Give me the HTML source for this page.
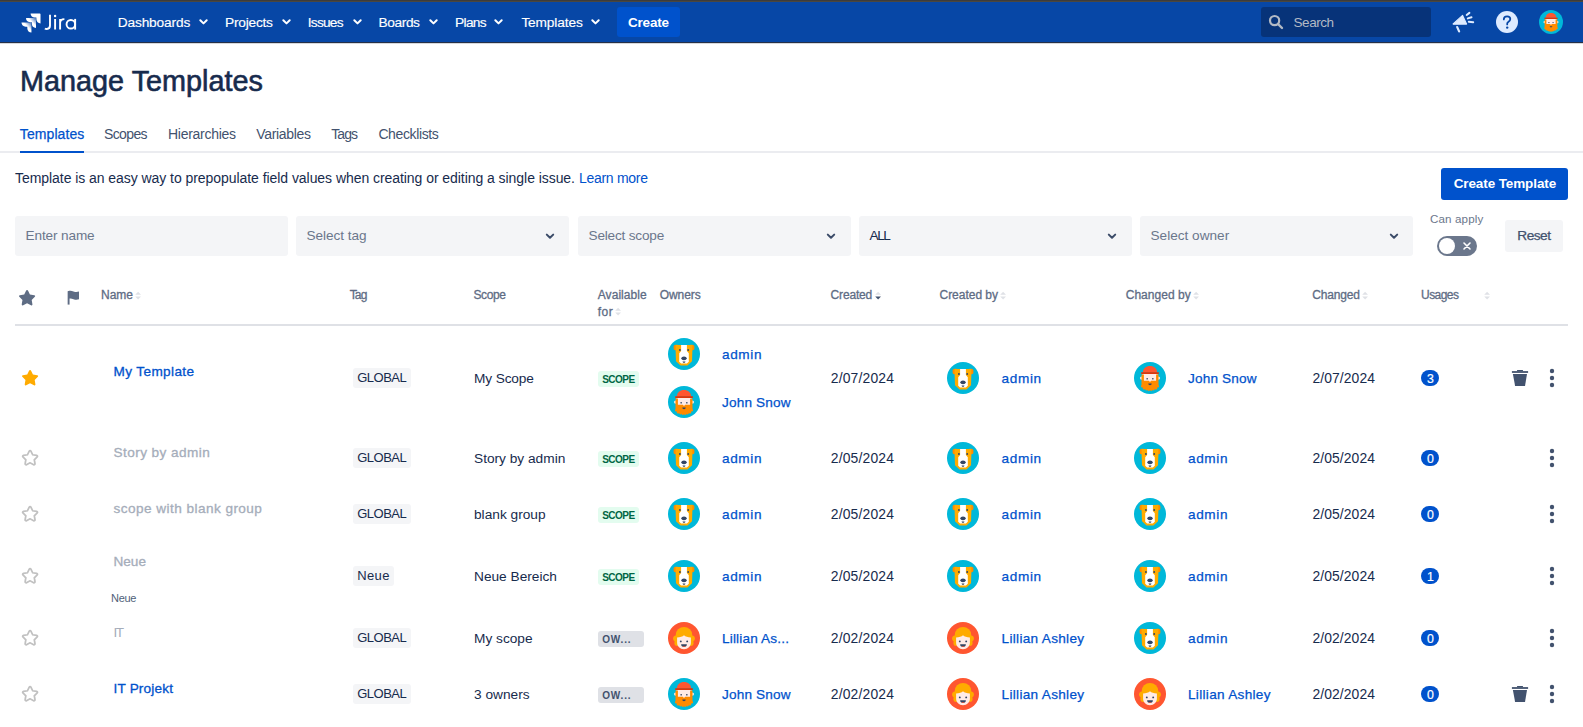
<!DOCTYPE html>
<html><head><meta charset="utf-8"><title>Manage Templates</title>
<style>
html,body{margin:0;padding:0;}
body{width:1583px;height:727px;overflow:hidden;position:relative;background:#fff;font-family:"Liberation Sans",sans-serif;}
.t{position:absolute;white-space:nowrap;line-height:1;}
.r{position:absolute;}
.a{position:absolute;overflow:visible;}
</style></head><body>
<div class="r" style="left:0px;top:0px;width:1583px;height:1px;background:#3c3c3c;"></div>
<div class="r" style="left:0px;top:1px;width:1583px;height:1px;background:#4a4740;"></div>
<div class="r" style="left:0px;top:2px;width:1583px;height:40px;background:#0747A6;"></div>
<div class="r" style="left:0px;top:42px;width:1583px;height:1px;background:#263046;"></div>
<div class="r" style="left:0px;top:43px;width:1583px;height:1px;background:#d6d8dc;"></div>
<svg class="a" style="left:20.7px;top:12.8px" width="20" height="20" viewBox="1.5 1.5 21 21">
<defs><linearGradient id="lg1" x1="0.98" y1="0.03" x2="0.6" y2="0.4"><stop offset="0.2" stop-color="#fff" stop-opacity="0.4"/><stop offset="1" stop-color="#fff"/></linearGradient></defs>
<path fill="#fff" d="M11.53 2c0 2.4 1.97 4.35 4.35 4.35h1.78v1.7c0 2.4 1.94 4.34 4.34 4.35V2.84a.84.84 0 0 0-.84-.84H11.53z"/>
<path fill="url(#lg1)" d="M6.77 6.8a4.362 4.362 0 0 0 4.34 4.34h1.8v1.72a4.362 4.362 0 0 0 4.34 4.34V7.63a.841.841 0 0 0-.83-.83H6.77z"/>
<path fill="url(#lg1)" d="M2 11.6c0 2.4 1.95 4.34 4.35 4.35h1.78v1.72c.01 2.39 1.95 4.33 4.34 4.34v-9.57a.84.84 0 0 0-.84-.84H2z"/>
</svg>
<svg class="a" style="left:0;top:0" width="90" height="40" viewBox="0 0 90 40"><g fill="none" stroke="#fff" stroke-width="1.9">
<path d="M50 14.8V25.6C50 28 48.8 29 46.9 29C46.1 29 45.4 28.8 44.9 28.4"/>
<path d="M55.1 18.9V29.6M60.1 18.9V29.6M60.1 23C60.1 20.4 61.600 19.1 64.400 19.1"/>
<circle cx="70.85" cy="24.25" r="4.3"/><path d="M75.15 18.9V29.6"/></g>
<circle cx="55.1" cy="16" r="1.2" fill="#fff"/></svg>
<div class="t" style="left:117.70px;top:15.50px;font-size:13.7px;color:#fff;font-weight:400;letter-spacing:-0.130px;-webkit-text-stroke:0.15px currentColor;">Dashboards</div>
<svg class="a" style="left:199px;top:18px" width="9" height="8" viewBox="0 0 9 8"><path d="M1.3 2.2 4.5 5.4 7.7 2.2" fill="none" stroke="#fff" stroke-width="2" stroke-linecap="round" stroke-linejoin="round"/></svg>
<div class="t" style="left:225.00px;top:15.50px;font-size:13.7px;color:#fff;font-weight:400;letter-spacing:-0.212px;-webkit-text-stroke:0.15px currentColor;">Projects</div>
<svg class="a" style="left:282px;top:18px" width="9" height="8" viewBox="0 0 9 8"><path d="M1.3 2.2 4.5 5.4 7.7 2.2" fill="none" stroke="#fff" stroke-width="2" stroke-linecap="round" stroke-linejoin="round"/></svg>
<div class="t" style="left:307.80px;top:15.50px;font-size:13.7px;color:#fff;font-weight:400;letter-spacing:-0.759px;-webkit-text-stroke:0.15px currentColor;">Issues</div>
<svg class="a" style="left:352.5px;top:18px" width="9" height="8" viewBox="0 0 9 8"><path d="M1.3 2.2 4.5 5.4 7.7 2.2" fill="none" stroke="#fff" stroke-width="2" stroke-linecap="round" stroke-linejoin="round"/></svg>
<div class="t" style="left:378.60px;top:15.50px;font-size:13.7px;color:#fff;font-weight:400;letter-spacing:-0.400px;-webkit-text-stroke:0.15px currentColor;">Boards</div>
<svg class="a" style="left:428.8px;top:18px" width="9" height="8" viewBox="0 0 9 8"><path d="M1.3 2.2 4.5 5.4 7.7 2.2" fill="none" stroke="#fff" stroke-width="2" stroke-linecap="round" stroke-linejoin="round"/></svg>
<div class="t" style="left:455.00px;top:15.50px;font-size:13.7px;color:#fff;font-weight:400;letter-spacing:-0.641px;-webkit-text-stroke:0.15px currentColor;">Plans</div>
<svg class="a" style="left:494px;top:18px" width="9" height="8" viewBox="0 0 9 8"><path d="M1.3 2.2 4.5 5.4 7.7 2.2" fill="none" stroke="#fff" stroke-width="2" stroke-linecap="round" stroke-linejoin="round"/></svg>
<div class="t" style="left:521.40px;top:15.50px;font-size:13.7px;color:#fff;font-weight:400;letter-spacing:-0.131px;-webkit-text-stroke:0.15px currentColor;">Templates</div>
<svg class="a" style="left:591px;top:18px" width="9" height="8" viewBox="0 0 9 8"><path d="M1.3 2.2 4.5 5.4 7.7 2.2" fill="none" stroke="#fff" stroke-width="2" stroke-linecap="round" stroke-linejoin="round"/></svg>
<div class="r" style="left:617px;top:7px;width:63px;height:30px;background:#0052CC;border-radius:3px;"></div>
<div class="t" style="left:628.00px;top:15.67px;font-size:13.5px;color:#fff;font-weight:700;letter-spacing:-0.205px;">Create</div>
<div class="r" style="left:1261px;top:7px;width:170px;height:30px;background:#073379;border-radius:3px;"></div>
<svg class="a" style="left:1268px;top:14px" width="16" height="16" viewBox="0 0 16 16"><circle cx="6.6" cy="6.6" r="4.6" fill="none" stroke="#B3BAC5" stroke-width="2.2"/><path d="M10 10 14 14" stroke="#B3BAC5" stroke-width="2.4" stroke-linecap="round"/></svg>
<div class="t" style="left:1293.60px;top:15.87px;font-size:13.5px;color:#B3BAC5;font-weight:400;letter-spacing:-0.474px;">Search</div>
<svg class="a" style="left:1451px;top:11px" width="24" height="22" viewBox="0 0 24 22">
<path d="M2.1 12.9 11.6 4.4 15.6 13.1 2.3 13.2Z" fill="#DEEBFF" stroke="#DEEBFF" stroke-width="1.1" stroke-linejoin="round"/>
<path d="M6.2 16.1 8.1 20.4" stroke="#DEEBFF" stroke-width="2.2" stroke-linecap="round"/>
<path d="M15.7 4 18.4 1.9M16.8 7.4 20.5 6.3M17.8 10.8 22.2 11.2" stroke="#DEEBFF" stroke-width="2" stroke-linecap="round"/>
</svg>
<svg class="a" style="left:1496px;top:11px" width="22" height="22" viewBox="0 0 22 22">
<circle cx="11" cy="11" r="11" fill="#DEEBFF"/>
<path d="M7.8 8.4c0-2 1.5-3.1 3.3-3.1 1.9 0 3.2 1.2 3.2 2.8 0 1.6-1 2.2-2 2.8-.8.5-1.1.9-1.1 1.8v.7" fill="none" stroke="#0747A6" stroke-width="1.75" stroke-linecap="round"/>
<circle cx="11.2" cy="16.6" r="1.2" fill="#0747A6"/>
</svg>
<svg class="a" style="left:1539px;top:10px" width="24" height="24" viewBox="0 0 32 32">
<circle cx="16" cy="16" r="16" fill="#00B8D9"/>
<circle cx="7.6" cy="16.1" r="1.6" fill="#FFEBE6"/><circle cx="24.4" cy="16.1" r="1.6" fill="#FFEBE6"/>
<path d="M8.4 11.5h15.2v8.5H8.4Z" fill="#FFEBE6"/>
<path d="M7.5 12.6H9.9V18.8H14.8L16 19.9 17.2 18.8H22.1V12.6H24.5V23C24.5 25.5 21 27.6 16 27.6S7.5 25.5 7.5 23Z" fill="#FF8B00"/><g fill="#FF8B00"><circle cx="8.3" cy="24.2" r="1.3"/><circle cx="10.2" cy="25.9" r="1.5"/><circle cx="12.6" cy="27" r="1.4"/><circle cx="14.8" cy="27.6" r="1.3"/><circle cx="17.2" cy="27.6" r="1.3"/><circle cx="19.4" cy="27" r="1.4"/><circle cx="21.8" cy="25.9" r="1.5"/><circle cx="23.7" cy="24.2" r="1.3"/></g>
<path d="M14.3 21.6h3.4c0 .9-.7 1.6-1.7 1.6s-1.7-.7-1.7-1.6Z" fill="#344563"/>
<path d="M8.9 10.4C8.9 6.6 12 4 16 4s7.1 2.6 7.1 6.4Z" fill="#FF5630"/>
<path d="M7.2 10.2h17.6v1.8H7.2Z" fill="#DE350B"/>
<rect x="12.4" y="16.2" width="1.6" height="1.2" fill="#344563"/><rect x="18" y="16.2" width="1.6" height="1.2" fill="#344563"/>
</svg>
<div class="t" style="left:20.00px;top:66.82px;font-size:28.8px;color:#172B4D;font-weight:400;letter-spacing:0.012px;-webkit-text-stroke:0.6px currentColor;">Manage Templates</div>
<div class="t" style="left:19.80px;top:127.15px;font-size:14px;color:#0052CC;font-weight:400;letter-spacing:0.086px;-webkit-text-stroke:0.25px currentColor;">Templates</div>
<div class="t" style="left:104.00px;top:127.15px;font-size:14px;color:#42526E;font-weight:400;letter-spacing:-0.618px;">Scopes</div>
<div class="t" style="left:168.00px;top:127.15px;font-size:14px;color:#42526E;font-weight:400;letter-spacing:-0.280px;">Hierarchies</div>
<div class="t" style="left:256.30px;top:127.15px;font-size:14px;color:#42526E;font-weight:400;letter-spacing:-0.329px;">Variables</div>
<div class="t" style="left:331.30px;top:127.15px;font-size:14px;color:#42526E;font-weight:400;letter-spacing:-0.956px;">Tags</div>
<div class="t" style="left:378.40px;top:127.15px;font-size:14px;color:#42526E;font-weight:400;letter-spacing:-0.378px;">Checklists</div>
<div class="r" style="left:0px;top:151px;width:1583px;height:2px;background:#EBECF0;"></div>
<div class="r" style="left:20px;top:151px;width:64px;height:2px;background:#0052CC;"></div>
<div class="t" style="left:15.00px;top:170.75px;font-size:14px;color:#172B4D;font-weight:400;letter-spacing:-0.055px;">Template is an easy way to prepopulate field values when creating or editing a single issue.</div>
<div class="t" style="left:579.00px;top:170.75px;font-size:14px;color:#0052CC;font-weight:400;letter-spacing:-0.288px;">Learn more</div>
<div class="r" style="left:1441px;top:168px;width:127px;height:32px;background:#0052CC;border-radius:3px;"></div>
<div class="t" style="left:1453.70px;top:177.27px;font-size:13.5px;color:#fff;font-weight:700;letter-spacing:-0.110px;">Create Template</div>
<div class="r" style="left:15px;top:216px;width:273px;height:40px;background:#F4F5F7;border-radius:3px;"></div>
<div class="t" style="left:25.50px;top:229.18px;font-size:13.6px;color:#6B778C;font-weight:400;letter-spacing:-0.122px;">Enter name</div>
<div class="r" style="left:296px;top:216px;width:273px;height:40px;background:#F4F5F7;border-radius:3px;"></div>
<div class="t" style="left:306.50px;top:229.18px;font-size:13.6px;color:#6B778C;font-weight:400;letter-spacing:-0.031px;">Select tag</div>
<svg class="a" style="left:545.0px;top:232.3px" width="10" height="9" viewBox="0 0 10 9"><path d="M1.8 2.6 5 5.8 8.2 2.6" fill="none" stroke="#3B4B68" stroke-width="2" stroke-linecap="round" stroke-linejoin="round"/></svg>
<div class="r" style="left:578px;top:216px;width:273px;height:40px;background:#F4F5F7;border-radius:3px;"></div>
<div class="t" style="left:588.50px;top:229.18px;font-size:13.6px;color:#6B778C;font-weight:400;letter-spacing:-0.189px;">Select scope</div>
<svg class="a" style="left:826.2px;top:232.3px" width="10" height="9" viewBox="0 0 10 9"><path d="M1.8 2.6 5 5.8 8.2 2.6" fill="none" stroke="#3B4B68" stroke-width="2" stroke-linecap="round" stroke-linejoin="round"/></svg>
<div class="r" style="left:859px;top:216px;width:273px;height:40px;background:#F4F5F7;border-radius:3px;"></div>
<div class="t" style="left:869.50px;top:229.18px;font-size:13.6px;color:#172B4D;font-weight:400;letter-spacing:-1.397px;">ALL</div>
<svg class="a" style="left:1106.5px;top:232.3px" width="10" height="9" viewBox="0 0 10 9"><path d="M1.8 2.6 5 5.8 8.2 2.6" fill="none" stroke="#3B4B68" stroke-width="2" stroke-linecap="round" stroke-linejoin="round"/></svg>
<div class="r" style="left:1140px;top:216px;width:273px;height:40px;background:#F4F5F7;border-radius:3px;"></div>
<div class="t" style="left:1150.50px;top:229.18px;font-size:13.6px;color:#6B778C;font-weight:400;letter-spacing:0.007px;">Select owner</div>
<svg class="a" style="left:1389.0px;top:232.3px" width="10" height="9" viewBox="0 0 10 9"><path d="M1.8 2.6 5 5.8 8.2 2.6" fill="none" stroke="#3B4B68" stroke-width="2" stroke-linecap="round" stroke-linejoin="round"/></svg>
<div class="t" style="left:1430.00px;top:212.98px;font-size:11.6px;color:#6B778C;font-weight:400;letter-spacing:0.133px;">Can apply</div>
<div class="r" style="left:1437px;top:236px;width:40px;height:20px;background:#6B778C;border-radius:10px;"></div>
<div class="r" style="left:1439px;top:238px;width:16px;height:16px;background:#fff;border-radius:8px;"></div>
<svg class="a" style="left:1461px;top:240px" width="12" height="12" viewBox="0 0 12 12"><path d="M3 3 9 9M9 3 3 9" stroke="#fff" stroke-width="1.6" stroke-linecap="round"/></svg>
<div class="r" style="left:1505px;top:220px;width:58px;height:32px;background:#F4F5F7;border-radius:3px;"></div>
<div class="t" style="left:1517.30px;top:229.40px;font-size:13.7px;color:#42526E;font-weight:400;letter-spacing:-0.521px;-webkit-text-stroke:0.25px currentColor;">Reset</div>
<svg class="a" style="left:14.93px;top:286.27px" width="24" height="24" viewBox="0 0 24 24"><path fill="#5E6C84" d="M12.072 17.284l-3.905 2.053a1 1 0 0 1-1.451-1.054l.745-4.349-3.159-3.08a1 1 0 0 1 .554-1.705l4.366-.635 1.953-3.956a1 1 0 0 1 1.794 0l1.952 3.956 4.366.635a1 1 0 0 1 .555 1.705l-3.16 3.08.746 4.349a1 1 0 0 1-1.45 1.054l-3.905-2.053z"/></svg>
<svg class="a" style="left:67px;top:290px" width="13" height="16" viewBox="0 0 13 16"><path d="M1.6 1.2v13.4" stroke="#5E6C84" stroke-width="1.9" stroke-linecap="butt"/><path d="M1 1.2c2-.8 3.5-.6 5.5.2 2 .7 3.500.8 5.500.1v7.800c-2 .700-3.500.600-5.500-.100-2-.800-3.500-1-5.500-.200Z" fill="#5E6C84"/></svg>
<div class="t" style="left:101.00px;top:289.34px;font-size:12px;color:#5E6C84;font-weight:400;letter-spacing:-0.005px;-webkit-text-stroke:0.3px currentColor;">Name</div>
<svg class="a" style="left:135px;top:291px" width="8" height="10" viewBox="0 0 8 10"><path d="M0.2 3.8 3.1 0.8 6 3.8Z" fill="#DFE1E6"/><path d="M0.2 5.6 3.1 8.6 6 5.6Z" fill="#DFE1E6"/></svg>
<div class="t" style="left:349.70px;top:289.34px;font-size:12px;color:#5E6C84;font-weight:400;letter-spacing:-0.822px;-webkit-text-stroke:0.3px currentColor;">Tag</div>
<div class="t" style="left:473.50px;top:289.34px;font-size:12px;color:#5E6C84;font-weight:400;letter-spacing:-0.380px;-webkit-text-stroke:0.3px currentColor;">Scope</div>
<div class="t" style="left:597.80px;top:289.34px;font-size:12px;color:#5E6C84;font-weight:400;letter-spacing:0.040px;-webkit-text-stroke:0.3px currentColor;">Available</div>
<div class="t" style="left:659.80px;top:289.34px;font-size:12px;color:#5E6C84;font-weight:400;letter-spacing:-0.088px;-webkit-text-stroke:0.3px currentColor;">Owners</div>
<div class="t" style="left:830.60px;top:289.34px;font-size:12px;color:#5E6C84;font-weight:400;letter-spacing:-0.166px;-webkit-text-stroke:0.3px currentColor;">Created</div>
<svg class="a" style="left:875px;top:291px" width="8" height="10" viewBox="0 0 8 10"><path d="M0.2 3.8 3.1 0.8 6 3.8Z" fill="#DFE1E6"/><path d="M0.2 5.6 3.1 8.6 6 5.6Z" fill="#42526E"/></svg>
<div class="t" style="left:939.50px;top:289.34px;font-size:12px;color:#5E6C84;font-weight:400;letter-spacing:-0.023px;-webkit-text-stroke:0.3px currentColor;">Created by</div>
<svg class="a" style="left:1000px;top:291px" width="8" height="10" viewBox="0 0 8 10"><path d="M0.2 3.8 3.1 0.8 6 3.8Z" fill="#DFE1E6"/><path d="M0.2 5.6 3.1 8.6 6 5.6Z" fill="#DFE1E6"/></svg>
<div class="t" style="left:1125.70px;top:289.34px;font-size:12px;color:#5E6C84;font-weight:400;letter-spacing:0.032px;-webkit-text-stroke:0.3px currentColor;">Changed by</div>
<svg class="a" style="left:1192.8px;top:291px" width="8" height="10" viewBox="0 0 8 10"><path d="M0.2 3.8 3.1 0.8 6 3.8Z" fill="#DFE1E6"/><path d="M0.2 5.6 3.1 8.6 6 5.6Z" fill="#DFE1E6"/></svg>
<div class="t" style="left:1312.20px;top:289.34px;font-size:12px;color:#5E6C84;font-weight:400;letter-spacing:-0.151px;-webkit-text-stroke:0.3px currentColor;">Changed</div>
<svg class="a" style="left:1362px;top:291px" width="8" height="10" viewBox="0 0 8 10"><path d="M0.2 3.8 3.1 0.8 6 3.8Z" fill="#DFE1E6"/><path d="M0.2 5.6 3.1 8.6 6 5.6Z" fill="#DFE1E6"/></svg>
<div class="t" style="left:1421.00px;top:289.34px;font-size:12px;color:#5E6C84;font-weight:400;letter-spacing:-0.538px;-webkit-text-stroke:0.3px currentColor;">Usages</div>
<svg class="a" style="left:1484px;top:291px" width="8" height="10" viewBox="0 0 8 10"><path d="M0.2 3.8 3.1 0.8 6 3.8Z" fill="#DFE1E6"/><path d="M0.2 5.6 3.1 8.6 6 5.6Z" fill="#DFE1E6"/></svg>
<div class="t" style="left:597.80px;top:305.94px;font-size:12px;color:#5E6C84;font-weight:400;letter-spacing:0.448px;-webkit-text-stroke:0.3px currentColor;">for</div>
<svg class="a" style="left:615.2px;top:306.8px" width="8" height="10" viewBox="0 0 8 10"><path d="M0.2 3.8 3.1 0.8 6 3.8Z" fill="#DFE1E6"/><path d="M0.2 5.6 3.1 8.6 6 5.6Z" fill="#DFE1E6"/></svg>
<div class="r" style="left:15px;top:324px;width:1553px;height:2px;background:#DFE1E6;"></div>
<svg class="a" style="left:17.93px;top:366.27px" width="24" height="24" viewBox="0 0 24 24"><path d="M12.072 17.284l-3.905 2.053a1 1 0 0 1-1.451-1.054l.745-4.349-3.159-3.08a1 1 0 0 1 .554-1.705l4.366-.635 1.953-3.956a1 1 0 0 1 1.794 0l1.952 3.956 4.366.635a1 1 0 0 1 .555 1.705l-3.16 3.08.746 4.349a1 1 0 0 1-1.45 1.054l-3.905-2.053z" fill="#FFAB00"/></svg>
<div class="t" style="left:113.50px;top:365.18px;font-size:13.6px;color:#0052CC;font-weight:400;letter-spacing:0.376px;-webkit-text-stroke:0.3px currentColor;">My Template</div>
<div class="r" style="left:353px;top:368.0px;width:57.7px;height:19.5px;background:#F4F5F7;border-radius:3px;"></div>
<div class="t" style="left:357.20px;top:370.79px;font-size:13px;color:#172B4D;font-weight:400;letter-spacing:-0.505px;">GLOBAL</div>
<div class="t" style="left:474.00px;top:371.60px;font-size:13.7px;color:#172B4D;font-weight:400;letter-spacing:-0.130px;">My Scope</div>
<div class="r" style="left:598px;top:371px;width:41px;height:16px;background:#E3FCEF;border-radius:3px;"></div>
<div class="t" style="left:602.20px;top:374.83px;font-size:10px;color:#006644;font-weight:700;letter-spacing:-0.527px;">SCOPE</div>
<svg class="a" style="left:668px;top:338px" width="32" height="32" viewBox="0 0 32 32">
<circle cx="16" cy="16" r="16" fill="#00B8D9"/>
<path d="M5.6 8.8c0-1.3.9-2.1 2.1-2.1h2v5.1c-.3.3-.8.4-1.300.4H7.2c-.9 0-1.6-.7-1.6-1.6Z" fill="#FF8B00"/>
<path d="M26.4 8.8c0-1.3-.9-2.1-2.1-2.1h-2v5.1c.3.3.8.4 1.300.4h1.200c.9 0 1.6-.7 1.6-1.6Z" fill="#FF8B00"/>
<path d="M7.6 6.9H24.4V12.1L24 23.3L19.5 27.4H12.5L8 23.3L7.6 12.1Z" fill="#FFAB00"/>
<path d="M13.1 6.9H18.9V13L20.8 15.2V23.8L18.9 25.6H13.1L11.2 23.8V15.2L13.1 13Z" fill="#fff"/>
<circle cx="11.9" cy="12" r="0.95" fill="#344563"/>
<circle cx="20.2" cy="12" r="0.95" fill="#344563"/>
<ellipse cx="16" cy="20.3" rx="2.7" ry="1.9" fill="#344563"/>
<path d="M14.5 23.6h3l-.7 1.1h-1.6Z" fill="#344563"/>
</svg>
<div class="t" style="left:722.00px;top:347.68px;font-size:13.6px;color:#0052CC;font-weight:400;letter-spacing:0.613px;-webkit-text-stroke:0.25px currentColor;">admin</div>
<svg class="a" style="left:668px;top:386px" width="32" height="32" viewBox="0 0 32 32">
<circle cx="16" cy="16" r="16" fill="#00B8D9"/>
<circle cx="7.6" cy="16.1" r="1.6" fill="#FFEBE6"/><circle cx="24.4" cy="16.1" r="1.6" fill="#FFEBE6"/>
<path d="M8.4 11.5h15.2v8.5H8.4Z" fill="#FFEBE6"/>
<path d="M7.5 12.6H9.9V18.8H14.8L16 19.9 17.2 18.8H22.1V12.6H24.5V23C24.5 25.5 21 27.6 16 27.6S7.5 25.5 7.5 23Z" fill="#FF8B00"/><g fill="#FF8B00"><circle cx="8.3" cy="24.2" r="1.3"/><circle cx="10.2" cy="25.9" r="1.5"/><circle cx="12.6" cy="27" r="1.4"/><circle cx="14.8" cy="27.6" r="1.3"/><circle cx="17.2" cy="27.6" r="1.3"/><circle cx="19.4" cy="27" r="1.4"/><circle cx="21.8" cy="25.9" r="1.5"/><circle cx="23.7" cy="24.2" r="1.3"/></g>
<path d="M14.3 21.6h3.4c0 .9-.7 1.6-1.7 1.6s-1.7-.7-1.7-1.6Z" fill="#344563"/>
<path d="M8.9 10.4C8.9 6.6 12 4 16 4s7.1 2.6 7.1 6.4Z" fill="#FF5630"/>
<path d="M7.2 10.2h17.6v1.8H7.2Z" fill="#DE350B"/>
<rect x="12.4" y="16.2" width="1.6" height="1.2" fill="#344563"/><rect x="18" y="16.2" width="1.6" height="1.2" fill="#344563"/>
</svg>
<div class="t" style="left:722.00px;top:395.68px;font-size:13.6px;color:#0052CC;font-weight:400;letter-spacing:0.158px;-webkit-text-stroke:0.25px currentColor;">John Snow</div>
<div class="t" style="left:830.80px;top:372.13px;font-size:13.9px;color:#172B4D;font-weight:400;letter-spacing:0.170px;">2/07/2024</div>
<svg class="a" style="left:947px;top:362px" width="32" height="32" viewBox="0 0 32 32">
<circle cx="16" cy="16" r="16" fill="#00B8D9"/>
<path d="M5.6 8.8c0-1.3.9-2.1 2.1-2.1h2v5.1c-.3.3-.8.4-1.300.4H7.2c-.9 0-1.6-.7-1.6-1.6Z" fill="#FF8B00"/>
<path d="M26.4 8.8c0-1.3-.9-2.1-2.1-2.1h-2v5.1c.3.3.8.4 1.300.4h1.200c.9 0 1.6-.7 1.6-1.6Z" fill="#FF8B00"/>
<path d="M7.6 6.9H24.4V12.1L24 23.3L19.5 27.4H12.5L8 23.3L7.6 12.1Z" fill="#FFAB00"/>
<path d="M13.1 6.9H18.9V13L20.8 15.2V23.8L18.9 25.6H13.1L11.2 23.8V15.2L13.1 13Z" fill="#fff"/>
<circle cx="11.9" cy="12" r="0.95" fill="#344563"/>
<circle cx="20.2" cy="12" r="0.95" fill="#344563"/>
<ellipse cx="16" cy="20.3" rx="2.7" ry="1.9" fill="#344563"/>
<path d="M14.5 23.6h3l-.7 1.1h-1.6Z" fill="#344563"/>
</svg>
<div class="t" style="left:1001.60px;top:371.68px;font-size:13.6px;color:#0052CC;font-weight:400;letter-spacing:0.613px;-webkit-text-stroke:0.25px currentColor;">admin</div>
<svg class="a" style="left:1134px;top:362px" width="32" height="32" viewBox="0 0 32 32">
<circle cx="16" cy="16" r="16" fill="#00B8D9"/>
<circle cx="7.6" cy="16.1" r="1.6" fill="#FFEBE6"/><circle cx="24.4" cy="16.1" r="1.6" fill="#FFEBE6"/>
<path d="M8.4 11.5h15.2v8.5H8.4Z" fill="#FFEBE6"/>
<path d="M7.5 12.6H9.9V18.8H14.8L16 19.9 17.2 18.8H22.1V12.6H24.5V23C24.5 25.5 21 27.6 16 27.6S7.5 25.5 7.5 23Z" fill="#FF8B00"/><g fill="#FF8B00"><circle cx="8.3" cy="24.2" r="1.3"/><circle cx="10.2" cy="25.9" r="1.5"/><circle cx="12.6" cy="27" r="1.4"/><circle cx="14.8" cy="27.6" r="1.3"/><circle cx="17.2" cy="27.6" r="1.3"/><circle cx="19.4" cy="27" r="1.4"/><circle cx="21.8" cy="25.9" r="1.5"/><circle cx="23.7" cy="24.2" r="1.3"/></g>
<path d="M14.3 21.6h3.4c0 .9-.7 1.6-1.7 1.6s-1.7-.7-1.7-1.6Z" fill="#344563"/>
<path d="M8.9 10.4C8.9 6.6 12 4 16 4s7.1 2.6 7.1 6.4Z" fill="#FF5630"/>
<path d="M7.2 10.2h17.6v1.8H7.2Z" fill="#DE350B"/>
<rect x="12.4" y="16.2" width="1.6" height="1.2" fill="#344563"/><rect x="18" y="16.2" width="1.6" height="1.2" fill="#344563"/>
</svg>
<div class="t" style="left:1188.00px;top:371.68px;font-size:13.6px;color:#0052CC;font-weight:400;letter-spacing:0.158px;-webkit-text-stroke:0.25px currentColor;">John Snow</div>
<div class="t" style="left:1312.50px;top:372.13px;font-size:13.9px;color:#172B4D;font-weight:400;letter-spacing:0.082px;">2/07/2024</div>
<div class="r" style="left:1421px;top:370px;width:18px;height:16px;background:#0052CC;border-radius:8px;"></div>
<div class="t" style="left:1427.00px;top:372.59px;font-size:12.3px;color:#fff;font-weight:400;-webkit-text-stroke:0.2px currentColor;">3</div>
<svg class="a" style="left:1511px;top:369px" width="18" height="18" viewBox="0 0 18 18"><path d="M6.2 .9h5.6l.3 1.3H5.9Z" fill="#42526E"/><path d="M.9 2.1H17.1V3.9H.9Z" fill="#42526E"/><path d="M1.9 5H16L14 16.9H4.1Z" fill="#42526E"/></svg>
<svg class="a" style="left:1548px;top:368px" width="8" height="20" viewBox="0 0 8 20"><circle cx="4" cy="3" r="2.2" fill="#42526E"/><circle cx="4" cy="10" r="2.2" fill="#42526E"/><circle cx="4" cy="17" r="2.2" fill="#42526E"/></svg>
<svg class="a" style="left:18px;top:446.1px" width="24" height="24" viewBox="0 0 24 24"><path d="M12.072 17.284l-3.905 2.053a1 1 0 0 1-1.451-1.054l.745-4.349-3.159-3.08a1 1 0 0 1 .554-1.705l4.366-.635 1.953-3.956a1 1 0 0 1 1.794 0l1.952 3.956 4.366.635a1 1 0 0 1 .555 1.705l-3.16 3.08.746 4.349a1 1 0 0 1-1.45 1.054l-3.905-2.053z" transform="translate(12.07 11.73) scale(0.92) translate(-12.07 -11.73)" fill="none" stroke="#C1C1C1" stroke-width="1.9"/></svg>
<div class="t" style="left:113.50px;top:445.88px;font-size:13.6px;color:#A5ADBA;font-weight:400;letter-spacing:0.431px;-webkit-text-stroke:0.3px currentColor;">Story by admin</div>
<div class="r" style="left:353px;top:448.0px;width:57.7px;height:19.5px;background:#F4F5F7;border-radius:3px;"></div>
<div class="t" style="left:357.20px;top:450.79px;font-size:13px;color:#172B4D;font-weight:400;letter-spacing:-0.505px;">GLOBAL</div>
<div class="t" style="left:474.00px;top:451.60px;font-size:13.7px;color:#172B4D;font-weight:400;">Story by admin</div>
<div class="r" style="left:598px;top:451px;width:41px;height:16px;background:#E3FCEF;border-radius:3px;"></div>
<div class="t" style="left:602.20px;top:454.83px;font-size:10px;color:#006644;font-weight:700;letter-spacing:-0.527px;">SCOPE</div>
<svg class="a" style="left:668px;top:442px" width="32" height="32" viewBox="0 0 32 32">
<circle cx="16" cy="16" r="16" fill="#00B8D9"/>
<path d="M5.6 8.8c0-1.3.9-2.1 2.1-2.1h2v5.1c-.3.3-.8.4-1.300.4H7.2c-.9 0-1.6-.7-1.6-1.6Z" fill="#FF8B00"/>
<path d="M26.4 8.8c0-1.3-.9-2.1-2.1-2.1h-2v5.1c.3.3.8.4 1.300.4h1.200c.9 0 1.6-.7 1.6-1.6Z" fill="#FF8B00"/>
<path d="M7.6 6.9H24.4V12.1L24 23.3L19.5 27.4H12.5L8 23.3L7.6 12.1Z" fill="#FFAB00"/>
<path d="M13.1 6.9H18.9V13L20.8 15.2V23.8L18.9 25.6H13.1L11.2 23.8V15.2L13.1 13Z" fill="#fff"/>
<circle cx="11.9" cy="12" r="0.95" fill="#344563"/>
<circle cx="20.2" cy="12" r="0.95" fill="#344563"/>
<ellipse cx="16" cy="20.3" rx="2.7" ry="1.9" fill="#344563"/>
<path d="M14.5 23.6h3l-.7 1.1h-1.6Z" fill="#344563"/>
</svg>
<div class="t" style="left:722.00px;top:451.68px;font-size:13.6px;color:#0052CC;font-weight:400;letter-spacing:0.613px;-webkit-text-stroke:0.25px currentColor;">admin</div>
<div class="t" style="left:830.80px;top:452.13px;font-size:13.9px;color:#172B4D;font-weight:400;letter-spacing:0.170px;">2/05/2024</div>
<svg class="a" style="left:947px;top:442px" width="32" height="32" viewBox="0 0 32 32">
<circle cx="16" cy="16" r="16" fill="#00B8D9"/>
<path d="M5.6 8.8c0-1.3.9-2.1 2.1-2.1h2v5.1c-.3.3-.8.4-1.300.4H7.2c-.9 0-1.6-.7-1.6-1.6Z" fill="#FF8B00"/>
<path d="M26.4 8.8c0-1.3-.9-2.1-2.1-2.1h-2v5.1c.3.3.8.4 1.300.4h1.200c.9 0 1.6-.7 1.6-1.6Z" fill="#FF8B00"/>
<path d="M7.6 6.9H24.4V12.1L24 23.3L19.5 27.4H12.5L8 23.3L7.6 12.1Z" fill="#FFAB00"/>
<path d="M13.1 6.9H18.9V13L20.8 15.2V23.8L18.9 25.6H13.1L11.2 23.8V15.2L13.1 13Z" fill="#fff"/>
<circle cx="11.9" cy="12" r="0.95" fill="#344563"/>
<circle cx="20.2" cy="12" r="0.95" fill="#344563"/>
<ellipse cx="16" cy="20.3" rx="2.7" ry="1.9" fill="#344563"/>
<path d="M14.5 23.6h3l-.7 1.1h-1.6Z" fill="#344563"/>
</svg>
<div class="t" style="left:1001.60px;top:451.68px;font-size:13.6px;color:#0052CC;font-weight:400;letter-spacing:0.613px;-webkit-text-stroke:0.25px currentColor;">admin</div>
<svg class="a" style="left:1134px;top:442px" width="32" height="32" viewBox="0 0 32 32">
<circle cx="16" cy="16" r="16" fill="#00B8D9"/>
<path d="M5.6 8.8c0-1.3.9-2.1 2.1-2.1h2v5.1c-.3.3-.8.4-1.300.4H7.2c-.9 0-1.6-.7-1.6-1.6Z" fill="#FF8B00"/>
<path d="M26.4 8.8c0-1.3-.9-2.1-2.1-2.1h-2v5.1c.3.3.8.4 1.300.4h1.200c.9 0 1.6-.7 1.6-1.6Z" fill="#FF8B00"/>
<path d="M7.6 6.9H24.4V12.1L24 23.3L19.5 27.4H12.5L8 23.3L7.6 12.1Z" fill="#FFAB00"/>
<path d="M13.1 6.9H18.9V13L20.8 15.2V23.8L18.9 25.6H13.1L11.2 23.8V15.2L13.1 13Z" fill="#fff"/>
<circle cx="11.9" cy="12" r="0.95" fill="#344563"/>
<circle cx="20.2" cy="12" r="0.95" fill="#344563"/>
<ellipse cx="16" cy="20.3" rx="2.7" ry="1.9" fill="#344563"/>
<path d="M14.5 23.6h3l-.7 1.1h-1.6Z" fill="#344563"/>
</svg>
<div class="t" style="left:1188.00px;top:451.68px;font-size:13.6px;color:#0052CC;font-weight:400;letter-spacing:0.613px;-webkit-text-stroke:0.25px currentColor;">admin</div>
<div class="t" style="left:1312.50px;top:452.13px;font-size:13.9px;color:#172B4D;font-weight:400;letter-spacing:0.082px;">2/05/2024</div>
<div class="r" style="left:1421px;top:450px;width:18px;height:16px;background:#0052CC;border-radius:8px;"></div>
<div class="t" style="left:1427.00px;top:452.59px;font-size:12.3px;color:#fff;font-weight:400;-webkit-text-stroke:0.2px currentColor;">0</div>
<svg class="a" style="left:1548px;top:448px" width="8" height="20" viewBox="0 0 8 20"><circle cx="4" cy="3" r="2.2" fill="#42526E"/><circle cx="4" cy="10" r="2.2" fill="#42526E"/><circle cx="4" cy="17" r="2.2" fill="#42526E"/></svg>
<svg class="a" style="left:18px;top:502.1px" width="24" height="24" viewBox="0 0 24 24"><path d="M12.072 17.284l-3.905 2.053a1 1 0 0 1-1.451-1.054l.745-4.349-3.159-3.08a1 1 0 0 1 .554-1.705l4.366-.635 1.953-3.956a1 1 0 0 1 1.794 0l1.952 3.956 4.366.635a1 1 0 0 1 .555 1.705l-3.16 3.08.746 4.349a1 1 0 0 1-1.45 1.054l-3.905-2.053z" transform="translate(12.07 11.73) scale(0.92) translate(-12.07 -11.73)" fill="none" stroke="#C1C1C1" stroke-width="1.9"/></svg>
<div class="t" style="left:113.50px;top:501.68px;font-size:13.6px;color:#A5ADBA;font-weight:400;letter-spacing:0.447px;-webkit-text-stroke:0.3px currentColor;">scope with blank group</div>
<div class="r" style="left:353px;top:504.0px;width:57.7px;height:19.5px;background:#F4F5F7;border-radius:3px;"></div>
<div class="t" style="left:357.20px;top:506.79px;font-size:13px;color:#172B4D;font-weight:400;letter-spacing:-0.505px;">GLOBAL</div>
<div class="t" style="left:474.00px;top:507.60px;font-size:13.7px;color:#172B4D;font-weight:400;">blank group</div>
<div class="r" style="left:598px;top:507px;width:41px;height:16px;background:#E3FCEF;border-radius:3px;"></div>
<div class="t" style="left:602.20px;top:510.83px;font-size:10px;color:#006644;font-weight:700;letter-spacing:-0.527px;">SCOPE</div>
<svg class="a" style="left:668px;top:498px" width="32" height="32" viewBox="0 0 32 32">
<circle cx="16" cy="16" r="16" fill="#00B8D9"/>
<path d="M5.6 8.8c0-1.3.9-2.1 2.1-2.1h2v5.1c-.3.3-.8.4-1.300.4H7.2c-.9 0-1.6-.7-1.6-1.6Z" fill="#FF8B00"/>
<path d="M26.4 8.8c0-1.3-.9-2.1-2.1-2.1h-2v5.1c.3.3.8.4 1.300.4h1.200c.9 0 1.6-.7 1.6-1.6Z" fill="#FF8B00"/>
<path d="M7.6 6.9H24.4V12.1L24 23.3L19.5 27.4H12.5L8 23.3L7.6 12.1Z" fill="#FFAB00"/>
<path d="M13.1 6.9H18.9V13L20.8 15.2V23.8L18.9 25.6H13.1L11.2 23.8V15.2L13.1 13Z" fill="#fff"/>
<circle cx="11.9" cy="12" r="0.95" fill="#344563"/>
<circle cx="20.2" cy="12" r="0.95" fill="#344563"/>
<ellipse cx="16" cy="20.3" rx="2.7" ry="1.9" fill="#344563"/>
<path d="M14.5 23.6h3l-.7 1.1h-1.6Z" fill="#344563"/>
</svg>
<div class="t" style="left:722.00px;top:507.68px;font-size:13.6px;color:#0052CC;font-weight:400;letter-spacing:0.613px;-webkit-text-stroke:0.25px currentColor;">admin</div>
<div class="t" style="left:830.80px;top:508.13px;font-size:13.9px;color:#172B4D;font-weight:400;letter-spacing:0.170px;">2/05/2024</div>
<svg class="a" style="left:947px;top:498px" width="32" height="32" viewBox="0 0 32 32">
<circle cx="16" cy="16" r="16" fill="#00B8D9"/>
<path d="M5.6 8.8c0-1.3.9-2.1 2.1-2.1h2v5.1c-.3.3-.8.4-1.300.4H7.2c-.9 0-1.6-.7-1.6-1.6Z" fill="#FF8B00"/>
<path d="M26.4 8.8c0-1.3-.9-2.1-2.1-2.1h-2v5.1c.3.3.8.4 1.300.4h1.200c.9 0 1.6-.7 1.6-1.6Z" fill="#FF8B00"/>
<path d="M7.6 6.9H24.4V12.1L24 23.3L19.5 27.4H12.5L8 23.3L7.6 12.1Z" fill="#FFAB00"/>
<path d="M13.1 6.9H18.9V13L20.8 15.2V23.8L18.9 25.6H13.1L11.2 23.8V15.2L13.1 13Z" fill="#fff"/>
<circle cx="11.9" cy="12" r="0.95" fill="#344563"/>
<circle cx="20.2" cy="12" r="0.95" fill="#344563"/>
<ellipse cx="16" cy="20.3" rx="2.7" ry="1.9" fill="#344563"/>
<path d="M14.5 23.6h3l-.7 1.1h-1.6Z" fill="#344563"/>
</svg>
<div class="t" style="left:1001.60px;top:507.68px;font-size:13.6px;color:#0052CC;font-weight:400;letter-spacing:0.613px;-webkit-text-stroke:0.25px currentColor;">admin</div>
<svg class="a" style="left:1134px;top:498px" width="32" height="32" viewBox="0 0 32 32">
<circle cx="16" cy="16" r="16" fill="#00B8D9"/>
<path d="M5.6 8.8c0-1.3.9-2.1 2.1-2.1h2v5.1c-.3.3-.8.4-1.300.4H7.2c-.9 0-1.6-.7-1.6-1.6Z" fill="#FF8B00"/>
<path d="M26.4 8.8c0-1.3-.9-2.1-2.1-2.1h-2v5.1c.3.3.8.4 1.300.4h1.200c.9 0 1.6-.7 1.6-1.6Z" fill="#FF8B00"/>
<path d="M7.6 6.9H24.4V12.1L24 23.3L19.5 27.4H12.5L8 23.3L7.6 12.1Z" fill="#FFAB00"/>
<path d="M13.1 6.9H18.9V13L20.8 15.2V23.8L18.9 25.6H13.1L11.2 23.8V15.2L13.1 13Z" fill="#fff"/>
<circle cx="11.9" cy="12" r="0.95" fill="#344563"/>
<circle cx="20.2" cy="12" r="0.95" fill="#344563"/>
<ellipse cx="16" cy="20.3" rx="2.7" ry="1.9" fill="#344563"/>
<path d="M14.5 23.6h3l-.7 1.1h-1.6Z" fill="#344563"/>
</svg>
<div class="t" style="left:1188.00px;top:507.68px;font-size:13.6px;color:#0052CC;font-weight:400;letter-spacing:0.613px;-webkit-text-stroke:0.25px currentColor;">admin</div>
<div class="t" style="left:1312.50px;top:508.13px;font-size:13.9px;color:#172B4D;font-weight:400;letter-spacing:0.082px;">2/05/2024</div>
<div class="r" style="left:1421px;top:506px;width:18px;height:16px;background:#0052CC;border-radius:8px;"></div>
<div class="t" style="left:1427.00px;top:508.59px;font-size:12.3px;color:#fff;font-weight:400;-webkit-text-stroke:0.2px currentColor;">0</div>
<svg class="a" style="left:1548px;top:504px" width="8" height="20" viewBox="0 0 8 20"><circle cx="4" cy="3" r="2.2" fill="#42526E"/><circle cx="4" cy="10" r="2.2" fill="#42526E"/><circle cx="4" cy="17" r="2.2" fill="#42526E"/></svg>
<svg class="a" style="left:18px;top:564.1px" width="24" height="24" viewBox="0 0 24 24"><path d="M12.072 17.284l-3.905 2.053a1 1 0 0 1-1.451-1.054l.745-4.349-3.159-3.08a1 1 0 0 1 .554-1.705l4.366-.635 1.953-3.956a1 1 0 0 1 1.794 0l1.952 3.956 4.366.635a1 1 0 0 1 .555 1.705l-3.16 3.08.746 4.349a1 1 0 0 1-1.45 1.054l-3.905-2.053z" transform="translate(12.07 11.73) scale(0.92) translate(-12.07 -11.73)" fill="none" stroke="#C1C1C1" stroke-width="1.9"/></svg>
<div class="t" style="left:113.50px;top:555.38px;font-size:13.6px;color:#A5ADBA;font-weight:400;letter-spacing:-0.006px;-webkit-text-stroke:0.3px currentColor;">Neue</div>
<div class="t" style="left:111.00px;top:592.99px;font-size:11px;color:#505F79;font-weight:400;letter-spacing:-0.300px;">Neue</div>
<div class="r" style="left:353px;top:566.0px;width:40.7px;height:19.5px;background:#F4F5F7;border-radius:3px;"></div>
<div class="t" style="left:357.20px;top:568.79px;font-size:13px;color:#172B4D;font-weight:400;letter-spacing:0.406px;">Neue</div>
<div class="t" style="left:474.00px;top:569.60px;font-size:13.7px;color:#172B4D;font-weight:400;">Neue Bereich</div>
<div class="r" style="left:598px;top:569px;width:41px;height:16px;background:#E3FCEF;border-radius:3px;"></div>
<div class="t" style="left:602.20px;top:572.83px;font-size:10px;color:#006644;font-weight:700;letter-spacing:-0.527px;">SCOPE</div>
<svg class="a" style="left:668px;top:560px" width="32" height="32" viewBox="0 0 32 32">
<circle cx="16" cy="16" r="16" fill="#00B8D9"/>
<path d="M5.6 8.8c0-1.3.9-2.1 2.1-2.1h2v5.1c-.3.3-.8.4-1.300.4H7.2c-.9 0-1.6-.7-1.6-1.6Z" fill="#FF8B00"/>
<path d="M26.4 8.8c0-1.3-.9-2.1-2.1-2.1h-2v5.1c.3.3.8.4 1.300.4h1.200c.9 0 1.6-.7 1.6-1.6Z" fill="#FF8B00"/>
<path d="M7.6 6.9H24.4V12.1L24 23.3L19.5 27.4H12.5L8 23.3L7.6 12.1Z" fill="#FFAB00"/>
<path d="M13.1 6.9H18.9V13L20.8 15.2V23.8L18.9 25.6H13.1L11.2 23.8V15.2L13.1 13Z" fill="#fff"/>
<circle cx="11.9" cy="12" r="0.95" fill="#344563"/>
<circle cx="20.2" cy="12" r="0.95" fill="#344563"/>
<ellipse cx="16" cy="20.3" rx="2.7" ry="1.9" fill="#344563"/>
<path d="M14.5 23.6h3l-.7 1.1h-1.6Z" fill="#344563"/>
</svg>
<div class="t" style="left:722.00px;top:569.68px;font-size:13.6px;color:#0052CC;font-weight:400;letter-spacing:0.613px;-webkit-text-stroke:0.25px currentColor;">admin</div>
<div class="t" style="left:830.80px;top:570.13px;font-size:13.9px;color:#172B4D;font-weight:400;letter-spacing:0.170px;">2/05/2024</div>
<svg class="a" style="left:947px;top:560px" width="32" height="32" viewBox="0 0 32 32">
<circle cx="16" cy="16" r="16" fill="#00B8D9"/>
<path d="M5.6 8.8c0-1.3.9-2.1 2.1-2.1h2v5.1c-.3.3-.8.4-1.300.4H7.2c-.9 0-1.6-.7-1.6-1.6Z" fill="#FF8B00"/>
<path d="M26.4 8.8c0-1.3-.9-2.1-2.1-2.1h-2v5.1c.3.3.8.4 1.300.4h1.200c.9 0 1.6-.7 1.6-1.6Z" fill="#FF8B00"/>
<path d="M7.6 6.9H24.4V12.1L24 23.3L19.5 27.4H12.5L8 23.3L7.6 12.1Z" fill="#FFAB00"/>
<path d="M13.1 6.9H18.9V13L20.8 15.2V23.8L18.9 25.6H13.1L11.2 23.8V15.2L13.1 13Z" fill="#fff"/>
<circle cx="11.9" cy="12" r="0.95" fill="#344563"/>
<circle cx="20.2" cy="12" r="0.95" fill="#344563"/>
<ellipse cx="16" cy="20.3" rx="2.7" ry="1.9" fill="#344563"/>
<path d="M14.5 23.6h3l-.7 1.1h-1.6Z" fill="#344563"/>
</svg>
<div class="t" style="left:1001.60px;top:569.68px;font-size:13.6px;color:#0052CC;font-weight:400;letter-spacing:0.613px;-webkit-text-stroke:0.25px currentColor;">admin</div>
<svg class="a" style="left:1134px;top:560px" width="32" height="32" viewBox="0 0 32 32">
<circle cx="16" cy="16" r="16" fill="#00B8D9"/>
<path d="M5.6 8.8c0-1.3.9-2.1 2.1-2.1h2v5.1c-.3.3-.8.4-1.300.4H7.2c-.9 0-1.6-.7-1.6-1.6Z" fill="#FF8B00"/>
<path d="M26.4 8.8c0-1.3-.9-2.1-2.1-2.1h-2v5.1c.3.3.8.4 1.300.4h1.200c.9 0 1.6-.7 1.6-1.6Z" fill="#FF8B00"/>
<path d="M7.6 6.9H24.4V12.1L24 23.3L19.5 27.4H12.5L8 23.3L7.6 12.1Z" fill="#FFAB00"/>
<path d="M13.1 6.9H18.9V13L20.8 15.2V23.8L18.9 25.6H13.1L11.2 23.8V15.2L13.1 13Z" fill="#fff"/>
<circle cx="11.9" cy="12" r="0.95" fill="#344563"/>
<circle cx="20.2" cy="12" r="0.95" fill="#344563"/>
<ellipse cx="16" cy="20.3" rx="2.7" ry="1.9" fill="#344563"/>
<path d="M14.5 23.6h3l-.7 1.1h-1.6Z" fill="#344563"/>
</svg>
<div class="t" style="left:1188.00px;top:569.68px;font-size:13.6px;color:#0052CC;font-weight:400;letter-spacing:0.613px;-webkit-text-stroke:0.25px currentColor;">admin</div>
<div class="t" style="left:1312.50px;top:570.13px;font-size:13.9px;color:#172B4D;font-weight:400;letter-spacing:0.082px;">2/05/2024</div>
<div class="r" style="left:1421px;top:568px;width:18px;height:16px;background:#0052CC;border-radius:8px;"></div>
<div class="t" style="left:1427.00px;top:570.59px;font-size:12.3px;color:#fff;font-weight:400;-webkit-text-stroke:0.2px currentColor;">1</div>
<svg class="a" style="left:1548px;top:566px" width="8" height="20" viewBox="0 0 8 20"><circle cx="4" cy="3" r="2.2" fill="#42526E"/><circle cx="4" cy="10" r="2.2" fill="#42526E"/><circle cx="4" cy="17" r="2.2" fill="#42526E"/></svg>
<svg class="a" style="left:18px;top:626.1px" width="24" height="24" viewBox="0 0 24 24"><path d="M12.072 17.284l-3.905 2.053a1 1 0 0 1-1.451-1.054l.745-4.349-3.159-3.08a1 1 0 0 1 .554-1.705l4.366-.635 1.953-3.956a1 1 0 0 1 1.794 0l1.952 3.956 4.366.635a1 1 0 0 1 .555 1.705l-3.16 3.08.746 4.349a1 1 0 0 1-1.45 1.054l-3.905-2.053z" transform="translate(12.07 11.73) scale(0.92) translate(-12.07 -11.73)" fill="none" stroke="#C1C1C1" stroke-width="1.9"/></svg>
<div class="t" style="left:113.50px;top:625.58px;font-size:13.6px;color:#A5ADBA;font-weight:400;letter-spacing:-1.590px;">IT</div>
<div class="r" style="left:353px;top:628.0px;width:57.7px;height:19.5px;background:#F4F5F7;border-radius:3px;"></div>
<div class="t" style="left:357.20px;top:630.79px;font-size:13px;color:#172B4D;font-weight:400;letter-spacing:-0.505px;">GLOBAL</div>
<div class="t" style="left:474.00px;top:631.60px;font-size:13.7px;color:#172B4D;font-weight:400;">My scope</div>
<div class="r" style="left:598px;top:631px;width:46px;height:16px;background:#DFE1E6;border-radius:3px;"></div>
<div class="t" style="left:602.20px;top:634.83px;font-size:10px;color:#42526E;font-weight:700;letter-spacing:0.850px;">OW...</div>
<svg class="a" style="left:668px;top:622px" width="32" height="32" viewBox="0 0 32 32">
<circle cx="16" cy="16" r="16" fill="#FF5630"/>
<g fill="#FFAB00"><circle cx="16" cy="13.2" r="8.3"/><circle cx="8.2" cy="16.6" r="3.1"/><circle cx="23.8" cy="16.6" r="3.1"/><circle cx="9.3" cy="21" r="2.9"/><circle cx="22.7" cy="21" r="2.9"/></g>
<path d="M9.1 15.6C12.2 15.3 14.500 14.500 16 13.200 17.500 14.500 19.800 15.300 22.900 15.600V20.600C22.900 24.400 20 27.300 16 27.300S9.100 24.400 9.100 20.600Z" fill="#FFEBE6"/>
<circle cx="12.8" cy="19.4" r="0.95" fill="#344563"/><circle cx="19.2" cy="19.4" r="0.95" fill="#344563"/>
<path d="M13.1 22.2H18.9C18.9 23.900 17.700 25 16 25S13.100 23.900 13.100 22.200Z" fill="#344563"/>
<path d="M14.600 24.600C15 24.100 15.500 23.900 16 23.900S17 24.100 17.400 24.600C17 24.900 16.500 25 16 25S15 24.900 14.600 24.600Z" fill="#FF5630"/>
</svg>
<div class="t" style="left:722.00px;top:631.68px;font-size:13.6px;color:#0052CC;font-weight:400;letter-spacing:0.166px;-webkit-text-stroke:0.25px currentColor;">Lillian As...</div>
<div class="t" style="left:830.80px;top:632.13px;font-size:13.9px;color:#172B4D;font-weight:400;letter-spacing:0.170px;">2/02/2024</div>
<svg class="a" style="left:947px;top:622px" width="32" height="32" viewBox="0 0 32 32">
<circle cx="16" cy="16" r="16" fill="#FF5630"/>
<g fill="#FFAB00"><circle cx="16" cy="13.2" r="8.3"/><circle cx="8.2" cy="16.6" r="3.1"/><circle cx="23.8" cy="16.6" r="3.1"/><circle cx="9.3" cy="21" r="2.9"/><circle cx="22.7" cy="21" r="2.9"/></g>
<path d="M9.1 15.6C12.2 15.3 14.500 14.500 16 13.200 17.500 14.500 19.800 15.300 22.900 15.600V20.600C22.900 24.400 20 27.300 16 27.300S9.100 24.400 9.100 20.600Z" fill="#FFEBE6"/>
<circle cx="12.8" cy="19.4" r="0.95" fill="#344563"/><circle cx="19.2" cy="19.4" r="0.95" fill="#344563"/>
<path d="M13.1 22.2H18.9C18.9 23.900 17.700 25 16 25S13.100 23.900 13.100 22.200Z" fill="#344563"/>
<path d="M14.600 24.600C15 24.100 15.500 23.900 16 23.900S17 24.100 17.400 24.600C17 24.900 16.500 25 16 25S15 24.900 14.600 24.600Z" fill="#FF5630"/>
</svg>
<div class="t" style="left:1001.60px;top:631.68px;font-size:13.6px;color:#0052CC;font-weight:400;letter-spacing:0.298px;-webkit-text-stroke:0.25px currentColor;">Lillian Ashley</div>
<svg class="a" style="left:1134px;top:622px" width="32" height="32" viewBox="0 0 32 32">
<circle cx="16" cy="16" r="16" fill="#00B8D9"/>
<path d="M5.6 8.8c0-1.3.9-2.1 2.1-2.1h2v5.1c-.3.3-.8.4-1.300.4H7.2c-.9 0-1.6-.7-1.6-1.6Z" fill="#FF8B00"/>
<path d="M26.4 8.8c0-1.3-.9-2.1-2.1-2.1h-2v5.1c.3.3.8.4 1.300.4h1.200c.9 0 1.6-.7 1.6-1.6Z" fill="#FF8B00"/>
<path d="M7.6 6.9H24.4V12.1L24 23.3L19.5 27.4H12.5L8 23.3L7.6 12.1Z" fill="#FFAB00"/>
<path d="M13.1 6.9H18.9V13L20.8 15.2V23.8L18.9 25.6H13.1L11.2 23.8V15.2L13.1 13Z" fill="#fff"/>
<circle cx="11.9" cy="12" r="0.95" fill="#344563"/>
<circle cx="20.2" cy="12" r="0.95" fill="#344563"/>
<ellipse cx="16" cy="20.3" rx="2.7" ry="1.9" fill="#344563"/>
<path d="M14.5 23.6h3l-.7 1.1h-1.6Z" fill="#344563"/>
</svg>
<div class="t" style="left:1188.00px;top:631.68px;font-size:13.6px;color:#0052CC;font-weight:400;letter-spacing:0.613px;-webkit-text-stroke:0.25px currentColor;">admin</div>
<div class="t" style="left:1312.50px;top:632.13px;font-size:13.9px;color:#172B4D;font-weight:400;letter-spacing:0.082px;">2/02/2024</div>
<div class="r" style="left:1421px;top:630px;width:18px;height:16px;background:#0052CC;border-radius:8px;"></div>
<div class="t" style="left:1427.00px;top:632.59px;font-size:12.3px;color:#fff;font-weight:400;-webkit-text-stroke:0.2px currentColor;">0</div>
<svg class="a" style="left:1548px;top:628px" width="8" height="20" viewBox="0 0 8 20"><circle cx="4" cy="3" r="2.2" fill="#42526E"/><circle cx="4" cy="10" r="2.2" fill="#42526E"/><circle cx="4" cy="17" r="2.2" fill="#42526E"/></svg>
<svg class="a" style="left:18px;top:682.1px" width="24" height="24" viewBox="0 0 24 24"><path d="M12.072 17.284l-3.905 2.053a1 1 0 0 1-1.451-1.054l.745-4.349-3.159-3.08a1 1 0 0 1 .554-1.705l4.366-.635 1.953-3.956a1 1 0 0 1 1.794 0l1.952 3.956 4.366.635a1 1 0 0 1 .555 1.705l-3.16 3.08.746 4.349a1 1 0 0 1-1.45 1.054l-3.905-2.053z" transform="translate(12.07 11.73) scale(0.92) translate(-12.07 -11.73)" fill="none" stroke="#C1C1C1" stroke-width="1.9"/></svg>
<div class="t" style="left:113.50px;top:681.78px;font-size:13.6px;color:#0052CC;font-weight:400;letter-spacing:0.172px;-webkit-text-stroke:0.3px currentColor;">IT Projekt</div>
<div class="r" style="left:353px;top:684.0px;width:57.7px;height:19.5px;background:#F4F5F7;border-radius:3px;"></div>
<div class="t" style="left:357.20px;top:686.79px;font-size:13px;color:#172B4D;font-weight:400;letter-spacing:-0.505px;">GLOBAL</div>
<div class="t" style="left:474.00px;top:687.60px;font-size:13.7px;color:#172B4D;font-weight:400;">3 owners</div>
<div class="r" style="left:598px;top:687px;width:46px;height:16px;background:#DFE1E6;border-radius:3px;"></div>
<div class="t" style="left:602.20px;top:690.83px;font-size:10px;color:#42526E;font-weight:700;letter-spacing:0.850px;">OW...</div>
<svg class="a" style="left:668px;top:678px" width="32" height="32" viewBox="0 0 32 32">
<circle cx="16" cy="16" r="16" fill="#00B8D9"/>
<circle cx="7.6" cy="16.1" r="1.6" fill="#FFEBE6"/><circle cx="24.4" cy="16.1" r="1.6" fill="#FFEBE6"/>
<path d="M8.4 11.5h15.2v8.5H8.4Z" fill="#FFEBE6"/>
<path d="M7.5 12.6H9.9V18.8H14.8L16 19.9 17.2 18.8H22.1V12.6H24.5V23C24.5 25.5 21 27.6 16 27.6S7.5 25.5 7.5 23Z" fill="#FF8B00"/><g fill="#FF8B00"><circle cx="8.3" cy="24.2" r="1.3"/><circle cx="10.2" cy="25.9" r="1.5"/><circle cx="12.6" cy="27" r="1.4"/><circle cx="14.8" cy="27.6" r="1.3"/><circle cx="17.2" cy="27.6" r="1.3"/><circle cx="19.4" cy="27" r="1.4"/><circle cx="21.8" cy="25.9" r="1.5"/><circle cx="23.7" cy="24.2" r="1.3"/></g>
<path d="M14.3 21.6h3.4c0 .9-.7 1.6-1.7 1.6s-1.7-.7-1.7-1.6Z" fill="#344563"/>
<path d="M8.9 10.4C8.9 6.6 12 4 16 4s7.1 2.6 7.1 6.4Z" fill="#FF5630"/>
<path d="M7.2 10.2h17.6v1.8H7.2Z" fill="#DE350B"/>
<rect x="12.4" y="16.2" width="1.6" height="1.2" fill="#344563"/><rect x="18" y="16.2" width="1.6" height="1.2" fill="#344563"/>
</svg>
<div class="t" style="left:722.00px;top:687.68px;font-size:13.6px;color:#0052CC;font-weight:400;letter-spacing:0.158px;-webkit-text-stroke:0.25px currentColor;">John Snow</div>
<div class="t" style="left:830.80px;top:688.13px;font-size:13.9px;color:#172B4D;font-weight:400;letter-spacing:0.170px;">2/02/2024</div>
<svg class="a" style="left:947px;top:678px" width="32" height="32" viewBox="0 0 32 32">
<circle cx="16" cy="16" r="16" fill="#FF5630"/>
<g fill="#FFAB00"><circle cx="16" cy="13.2" r="8.3"/><circle cx="8.2" cy="16.6" r="3.1"/><circle cx="23.8" cy="16.6" r="3.1"/><circle cx="9.3" cy="21" r="2.9"/><circle cx="22.7" cy="21" r="2.9"/></g>
<path d="M9.1 15.6C12.2 15.3 14.500 14.500 16 13.200 17.500 14.500 19.800 15.300 22.900 15.600V20.600C22.900 24.400 20 27.300 16 27.300S9.100 24.400 9.100 20.600Z" fill="#FFEBE6"/>
<circle cx="12.8" cy="19.4" r="0.95" fill="#344563"/><circle cx="19.2" cy="19.4" r="0.95" fill="#344563"/>
<path d="M13.1 22.2H18.9C18.9 23.900 17.700 25 16 25S13.100 23.900 13.100 22.200Z" fill="#344563"/>
<path d="M14.600 24.600C15 24.100 15.500 23.900 16 23.900S17 24.100 17.400 24.600C17 24.900 16.500 25 16 25S15 24.900 14.600 24.600Z" fill="#FF5630"/>
</svg>
<div class="t" style="left:1001.60px;top:687.68px;font-size:13.6px;color:#0052CC;font-weight:400;letter-spacing:0.298px;-webkit-text-stroke:0.25px currentColor;">Lillian Ashley</div>
<svg class="a" style="left:1134px;top:678px" width="32" height="32" viewBox="0 0 32 32">
<circle cx="16" cy="16" r="16" fill="#FF5630"/>
<g fill="#FFAB00"><circle cx="16" cy="13.2" r="8.3"/><circle cx="8.2" cy="16.6" r="3.1"/><circle cx="23.8" cy="16.6" r="3.1"/><circle cx="9.3" cy="21" r="2.9"/><circle cx="22.7" cy="21" r="2.9"/></g>
<path d="M9.1 15.6C12.2 15.3 14.500 14.500 16 13.200 17.500 14.500 19.800 15.300 22.900 15.600V20.600C22.900 24.400 20 27.300 16 27.300S9.100 24.400 9.100 20.600Z" fill="#FFEBE6"/>
<circle cx="12.8" cy="19.4" r="0.95" fill="#344563"/><circle cx="19.2" cy="19.4" r="0.95" fill="#344563"/>
<path d="M13.1 22.2H18.9C18.9 23.900 17.700 25 16 25S13.100 23.900 13.100 22.200Z" fill="#344563"/>
<path d="M14.600 24.600C15 24.100 15.500 23.900 16 23.900S17 24.100 17.400 24.600C17 24.900 16.500 25 16 25S15 24.900 14.600 24.600Z" fill="#FF5630"/>
</svg>
<div class="t" style="left:1188.00px;top:687.68px;font-size:13.6px;color:#0052CC;font-weight:400;letter-spacing:0.298px;-webkit-text-stroke:0.25px currentColor;">Lillian Ashley</div>
<div class="t" style="left:1312.50px;top:688.13px;font-size:13.9px;color:#172B4D;font-weight:400;letter-spacing:0.082px;">2/02/2024</div>
<div class="r" style="left:1421px;top:686px;width:18px;height:16px;background:#0052CC;border-radius:8px;"></div>
<div class="t" style="left:1427.00px;top:688.59px;font-size:12.3px;color:#fff;font-weight:400;-webkit-text-stroke:0.2px currentColor;">0</div>
<svg class="a" style="left:1511px;top:685px" width="18" height="18" viewBox="0 0 18 18"><path d="M6.2 .9h5.6l.3 1.3H5.9Z" fill="#42526E"/><path d="M.9 2.1H17.1V3.9H.9Z" fill="#42526E"/><path d="M1.9 5H16L14 16.9H4.1Z" fill="#42526E"/></svg>
<svg class="a" style="left:1548px;top:684px" width="8" height="20" viewBox="0 0 8 20"><circle cx="4" cy="3" r="2.2" fill="#42526E"/><circle cx="4" cy="10" r="2.2" fill="#42526E"/><circle cx="4" cy="17" r="2.2" fill="#42526E"/></svg>
</body></html>
